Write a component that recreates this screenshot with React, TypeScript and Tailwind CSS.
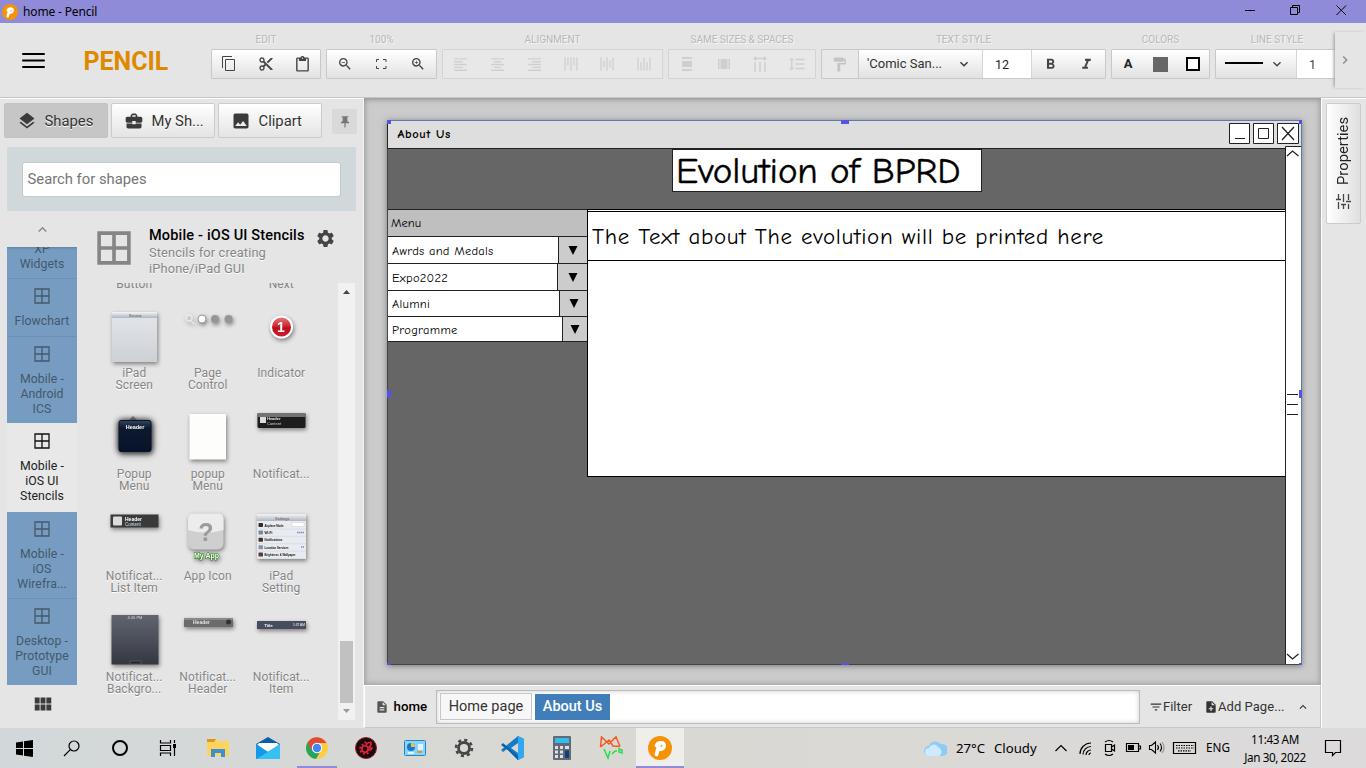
import React from "react";
import {
  MdLayers, MdBusinessCenter, MdImage, MdPushPin, MdSettings, MdZoomIn, MdZoomOut, MdContentCut,
  MdFormatAlignLeft, MdFormatAlignCenter, MdFormatAlignRight, MdFormatPaint, MdFormatBold, MdFormatItalic,
  MdExpandMore, MdExpandLess, MdChevronRight, MdViewModule, MdDescription, MdNoteAdd, MdFilterList,
  MdFormatLineSpacing, MdContentPaste,
} from "react-icons/md";

const ROBOTO = "font-['Roboto',sans-serif]";
const SEGOE = "font-['Noto_Sans',sans-serif]";

function PencilLogo({ size }: { size: number }) {
  return (
    <svg width={size} height={size} viewBox="0 0 24 24" className="shrink-0">
      <circle cx="12" cy="12" r="12" fill="#f49305" />
      <path d="M8.500 18.500l2.500-9.500M8.500 9.500Q9.500 6.800 12.500 6.800q4.200 0 3.500 3.400-.7 3-4.500 3" fill="none" stroke="#fff" strokeWidth="3.800" strokeLinejoin="round" strokeLinecap="round" />
    </svg>
  );
}

function TitleBar() {
  return (
    <header className="flex h-[23px] shrink-0 items-center bg-[#8f8bd9] pl-[2px]">
      <PencilLogo size={16} />
      <span className={`${SEGOE} ml-[5px] text-[12px] tracking-[-0.15px] text-black`}>home - Pencil</span>
      <svg className="ml-auto" width="140" height="23" viewBox="1226 0 140 23" fill="none" stroke="#000">
        <path d="M1245 10.500h10M1290.500 7.500h7v7h-7zM1292.500 7V5.500h7v7h-1.500" />
        <path d="M1336.500 5.500l9.500 9.500M1346 5.500l-9.500 9.500" />
      </svg>
    </header>
  );
}

function Group({ label, width, disabled, children }: { label: string; width: string; disabled?: boolean; children: React.ReactNode }) {
  return (
    <div className={`${width} shrink-0`}>
      <div className="h-[15px] whitespace-nowrap text-center text-[10px] leading-[16px] text-[#b8b8b8] [text-shadow:1px_1px_0_#f6f6f6]">{label}</div>
      <div className={`mt-[2px] flex h-[30px] items-stretch rounded-[1px] border ${disabled ? "border-[#d4d4d4] bg-[#e8e8e8] text-[#cfcfcf]" : "border-[#c8c8c8] bg-linear-to-b from-white to-[#e2e2e2] text-[#444]"}`}>
        {children}
      </div>
    </div>
  );
}

function Slot({ children }: { children: React.ReactNode }) {
  return <div className="flex flex-1 items-center justify-center">{children}</div>;
}

function Glyph({ d, w = 1 }: { d: string; w?: number }) {
  return (
    <svg width="16" height="16" viewBox="0 0 16 16" fill="none" stroke="currentColor" strokeWidth={w}>
      <path d={d} />
    </svg>
  );
}

function Toolbar() {
  return (
    <div className="flex h-[75px] shrink-0 border-b border-[#c6c6c6] bg-[#e5e5e5]">
      <svg className="mt-[29px] ml-[22px]" width="24" height="18" viewBox="0 0 24 18" stroke="#000" strokeWidth="2" strokeLinecap="round">
        <path d="M1 2h21M1 8.500h21M1 15h21" />
      </svg>
      <div className="mt-[22px] ml-[37.500px] w-[127.500px] text-[25px] leading-[34px] font-bold tracking-[-0.050px] text-[#de8a00]">PENCIL</div>
      <div className="flex w-[1124px] gap-[5px] overflow-hidden pt-[9px]">
        <Group label="EDIT" width="w-[110px]">
          <Slot><Glyph d="M3.500 3.500h9v11h-9zM.5 12V.5H10" /></Slot>
          <Slot><MdContentCut size={16} /></Slot>
          <Slot><MdContentPaste size={17} /></Slot>
        </Group>
        <Group label="100%" width="w-[111px]">
          <Slot><MdZoomOut size={16} /></Slot>
          <Slot><Glyph d="M3.500 6V3.500H6M10 3.500h3V6M13 10v2.500h-3M6 12.500H3.500V10" /></Slot>
          <Slot><MdZoomIn size={16} /></Slot>
        </Group>
        <Group label="ALIGNMENT" width="w-[221px]" disabled>
          <Slot><MdFormatAlignLeft size={17} className="-ml-[1px]" /></Slot>
          <Slot><MdFormatAlignCenter size={17} /></Slot>
          <Slot><MdFormatAlignRight size={17} /></Slot>
          <Slot><Glyph w={1.3} d="M2 1.500v13M5 1.500v8M8 1.500v13M11 1.500v8M14 1.500v13" /></Slot>
          <Slot><Glyph w={1.3} d="M2 1.500v13M5 4.500v7M8 1.500v13M11 4.500v7M14 1.500v13" /></Slot>
          <Slot><Glyph w={1.3} d="M2 1.500v13M5 6v8.500M8 1.500v13M11 6v8.500M14 1.500v13" /></Slot>
        </Group>
        <Group label="SAME SIZES & SPACES" width="w-[148px]" disabled>
          <Slot>
            <svg width="12" height="14" viewBox="0 0 12 14" fill="currentColor"><path d="M1 0h10v2H1zM1 4h10v6H1zM1 12h10v2H1z" /></svg>
          </Slot>
          <Slot>
            <svg width="14" height="12" viewBox="0 0 14 12" fill="currentColor"><path d="M1 1h1.500v10H1zM3.500 1h7v10h-7zM11.500 1H13v10h-1.500z" /></svg>
          </Slot>
          <Slot><Glyph w={1.4} d="M3 6v10M8 6v10M13 6v10M2 2.500h12M4 .5l-2 2 2 2M12 .5l2 2-2 2" /></Slot>
          <Slot><MdFormatLineSpacing size={18} /></Slot>
        </Group>
        <Group label="TEXT STYLE" width="w-[285px]">
          <div className="flex w-[37px] items-center justify-center border-r border-[#c8c8c8] bg-[#e8e8e8] pr-[2px] text-[#c4c4c4]"><MdFormatPaint size={17} /></div>
          <div className="flex w-[123px] items-center pl-[8px] text-[#333]">
            <span className="w-[83px] text-[13px] whitespace-nowrap">'Comic San...</span>
            <MdExpandMore size={16} className="ml-[6px]" />
          </div>
          <div className="w-[50px] border-x border-[#d6d6d6] bg-white pl-[12px] text-[12.500px] leading-[29px] text-[#222]">12</div>
          <Slot><MdFormatBold size={17} /></Slot>
          <Slot><MdFormatItalic size={17} /></Slot>
        </Group>
        <Group label="COLORS" width="w-[99px]">
          <Slot><span className="text-[13px] font-bold text-[#222]">A</span></Slot>
          <Slot><span className="size-[15px] bg-[#666]" /></Slot>
          <Slot><span className="size-[14px] border-2 border-black bg-white" /></Slot>
        </Group>
        <Group label="LINE STYLE" width="w-[124px]">
          <div className="flex w-[81px] items-center border-r border-[#d6d6d6] pl-[9px]">
            <span className="-mt-[2px] h-[2px] w-[38px] bg-black" />
            <MdExpandMore size={16} className="ml-[6px]" />
          </div>
          <div className="flex-1 bg-white pl-[12px] text-[12.500px] leading-[29px]">1</div>
        </Group>
      </div>
      <div className="mt-[9px] flex h-[56px] w-[31px] items-center justify-center pr-[11px] text-[#888] shadow-[-2px_0_3px_-1px_#999]">
        <MdChevronRight size={16} />
      </div>
    </div>
  );
}

function TabButton({ icon, label, active }: { icon: React.ReactNode; label: string; active?: boolean }) {
  return (
    <div className={`flex h-[35px] w-[103.500px] items-center gap-[7.500px] rounded-[2px] border pl-[12px] text-[14.800px] text-[#333] [text-shadow:0_1px_0_#fff] ${active ? "border-[#c2c2c2] bg-[#c6c6c6]" : "border-[#cbcbcb] bg-linear-to-b from-white to-[#e4e4e4]"}`}>
      {icon}
      <span className="pt-[1px] whitespace-nowrap">{label}</span>
    </div>
  );
}

function PaneIcon({ size, color, w }: { size: number; color: string; w: number }) {
  return (
    <svg width={size} height={size} viewBox="0 0 16 16" fill="none" stroke={color} strokeWidth={w} className="shrink-0">
      <path d="M1 1h14v14H1zM8 1v14M1 8h14" />
    </svg>
  );
}

function Category({ lines, height, active, last }: { lines: string[]; height: string; active?: boolean; last?: boolean }) {
  return (
    <div className={`${height} flex shrink-0 flex-col items-center ${active ? "bg-[#e8e8e8] pt-[10px] text-[#222]" : "bg-[#769dc1] pt-[9px] text-[#45586b]"} ${!active && !last ? "border-b border-[#6a90b3]" : ""}`}>
      <PaneIcon size={16} color={active ? "#111" : "#45586b"} w={1.3} />
      <div className="mt-[10px] text-center text-[12.300px] leading-[15px] tracking-[0.050px]">
        {lines.map((l) => <div key={l} className="whitespace-nowrap">{l}</div>)}
      </div>
    </div>
  );
}

function Thumb({ kind }: { kind: string }) {
  const f = "Liberation Sans, sans-serif";
  return (
    <svg width="74.500" height="62" viewBox="0 0 74.500 62" className="shrink-0 overflow-visible tracking-normal [filter:drop-shadow(1px_2px_2px_rgba(0,0,0,0.45))]">
      <defs>
        <linearGradient id="silver" x1="0" y1="0" x2="0" y2="1"><stop offset="0" stopColor="#e3e6ea" /><stop offset="1" stopColor="#cdd0d5" /></linearGradient>
        <linearGradient id="bar" x1="0" y1="0" x2="0" y2="1"><stop offset="0" stopColor="#f4f5f7" /><stop offset="1" stopColor="#b0b5c0" /></linearGradient>
        <linearGradient id="slate" x1="0" y1="0" x2="0" y2="1"><stop offset="0" stopColor="#61646e" /><stop offset=".5" stopColor="#4b4f5a" /><stop offset="1" stopColor="#34373e" /></linearGradient>
        <linearGradient id="navy" x1="0" y1="0" x2="0" y2="1"><stop offset="0" stopColor="#34445c" /><stop offset=".25" stopColor="#0c1a30" /><stop offset="1" stopColor="#071329" /></linearGradient>
        <linearGradient id="red" x1="0" y1="0" x2="0" y2="1"><stop offset="0" stopColor="#e58080" /><stop offset=".45" stopColor="#cf2a33" /><stop offset=".55" stopColor="#b80f1c" /><stop offset="1" stopColor="#d02030" /></linearGradient>
      </defs>
      {kind === "ipad" && (<g><path d="M15 7h45v50H15z" fill="url(#silver)" /><path d="M15 7h45v6H15z" fill="url(#bar)" /><text x="32" y="11.500" fontSize="3.500" fill="#555" fontFamily={f}>Receive</text></g>)}
      {kind === "dots" && (<g><g fill="none" stroke="#f3f3f3" strokeWidth="1.500" opacity=".7"><circle cx="18" cy="13" r="3" /><path d="M20 16l3 3" /></g><circle cx="31" cy="14" r="4" fill="#fff" stroke="#999" /><circle cx="44" cy="14" r="4" fill="#969696" /><circle cx="57.500" cy="14" r="4" fill="#969696" /></g>)}
      {kind === "badge" && (<g><circle cx="37.500" cy="22" r="10.500" fill="url(#red)" stroke="#fff" strokeWidth="2" /><text x="37" y="27" textAnchor="middle" fontSize="14" fontWeight="700" fill="#fff" fontFamily={f}>1</text></g>)}
      {kind === "popup" && (<g><path d="M31 15l5-5 5 5z" fill="#77808d" /><rect x="22" y="14.500" width="32" height="31" rx="2" fill="url(#navy)" stroke="#0b1526" className="[filter:drop-shadow(0_0_3px_#222)]" /><text x="38" y="23" textAnchor="middle" fontSize="5.500" fontWeight="700" fill="#fff" fontFamily={f}>Header</text></g>)}
      {kind === "blank" && <path d="M18.500 8h36.500v45.500H18.500z" fill="#fdfdfb" />}
      {kind === "notif" && (<g><rect x="13.500" y="7" width="48" height="15" rx="1.500" fill="#1d1d1d" /><path d="M13.500 7h48v4h-48z" fill="#737373" /><rect x="16" y="11" width="6" height="6" fill="#ddd" /><text x="23" y="14" fontSize="4" fontWeight="700" fill="#e6f0e6" fontFamily={f}>Header</text><text x="23" y="19" fontSize="4" fill="#d0d8d0" fontFamily={f}>Content</text></g>)}
      {kind === "listitem" && (<g><path d="M13.500 6.500h48v13h-48z" fill="#3a3a3a" /><rect x="16" y="8.500" width="9" height="9" rx="1" fill="#ddd" /><text x="28" y="12.500" fontSize="5" fontWeight="700" fill="#fff" fontFamily={f}>Header</text><text x="28" y="18" fontSize="4.500" fill="#c8e0f4" fontFamily={f}>Content</text></g>)}
      {kind === "app" && (<g><rect x="17" y="5.500" width="35.500" height="36" rx="6" fill="#cfcfcf" /><path d="M17 22V11q0-5.500 6-5.500h24q5.500 0 5.500 5.500v11q-18 5-35.500 0z" fill="#ececec" /><text x="35" y="33" textAnchor="middle" fontSize="25" fontWeight="700" fill="#9b9b9b" fontFamily={f}>?</text><text x="35.500" y="50" textAnchor="middle" fontSize="7" fontWeight="700" fill="#f2ffdc" stroke="#2c7a2c" strokeWidth="1.200" paintOrder="stroke" fontFamily={f}>My App</text></g>)}
      {kind === "settings" && (
        <g>
          <path d="M13 6h49v45H13z" fill="#e8ebef" /><path d="M13 6h49v7H13z" fill="url(#bar)" />
          <text x="31" y="11.500" fontSize="4" fill="#555" fontFamily={f}>Settings</text>
          <path d="M48 14.500h12v4H48z" fill="#fff" stroke="#ccc" strokeWidth=".5" />
          {["Airplane Mode", "Wi-Fi", "Notifications", "Location Services", "Brightness & Wallpaper"].map((t, i) => (
            <g key={t}><rect x="14.500" y={15 + i * 7.4} width="4.500" height="4" rx=".7" fill={["#3b2b20", "#7b879c", "#432", "#8b91a8", "#5b3c3c"][i]} /><text x="20.500" y={18.5 + i * 7.4} fontSize="3.600" fontWeight="700" fill="#111" fontFamily={f} textLength={[19, 8, 18, 24, 31][i]} lengthAdjust="spacingAndGlyphs">{t}</text><path d={`M13 ${21 + i * 7.4}h49`} stroke="#ccd" strokeWidth=".4" /></g>
          ))}
          <path d="M53 24.500h7M57 39h3" stroke="#7a8fc0" strokeWidth="1.500" strokeDasharray="1.500 .5" />
        </g>
      )}
      {kind === "background" && (<g><path d="M14.500 6h47v49.500h-47z" fill="url(#slate)" /><text x="38" y="10" textAnchor="middle" fontSize="4" fill="#ddd" fontFamily={f}>4:20 PM</text><path d="M33 55v-3h11v3z" fill="#24272c" stroke="#777" strokeWidth=".5" /></g>)}
      {kind === "header" && (<g><path d="M13 9h49v9H13z" fill="#6b6b6b" /><path d="M13 9h49v2H13z" fill="#8a8a8a" /><text x="22" y="14.500" fontSize="5" fontWeight="700" fill="#dfe6e0" fontFamily={f}>Header</text><circle cx="57.500" cy="13" r="2.500" fill="#333" /></g>)}
      {kind === "item" && (<g><path d="M13 12h49v8H13z" fill="#454d5f" /><text x="20.500" y="17.500" fontSize="4" fontWeight="700" fill="#fff" fontFamily={f}>Title</text><text x="49" y="17" fontSize="3.400" fill="#fff" fontFamily={f} textLength="12" lengthAdjust="spacingAndGlyphs">1:37 AM</text></g>)}
    </svg>
  );
}

const SHAPES: [string, string[]][] = [
  ["ipad", ["iPad", "Screen"]], ["dots", ["Page", "Control"]], ["badge", ["Indicator"]],
  ["popup", ["Popup", "Menu"]], ["blank", ["popup", "Menu"]], ["notif", ["Notificat..."]],
  ["listitem", ["Notificat...", "List Item"]], ["app", ["App Icon"]], ["settings", ["iPad", "Setting"]],
  ["background", ["Notificat...", "Backgro..."]], ["header", ["Notificat...", "Header"]], ["item", ["Notificat...", "Item"]],
];

function Sidebar() {
  return (
    <aside className="flex w-[364px] shrink-0 flex-col border-t border-r border-t-white border-r-[#f4f4f4] bg-[#e5e5e5]">
      <div className="flex h-[40px] shrink-0 items-start gap-[3.500px] pt-[4px] pl-[4px]">
        <TabButton active icon={<MdLayers size={20} className="text-[#3b3b3b]" />} label="Shapes" />
        <TabButton icon={<MdBusinessCenter size={20} className="text-[#3b3b3b]" />} label="My Sh..." />
        <TabButton icon={<MdImage size={20} className="text-[#3b3b3b]" />} label="Clipart" />
        <div className="mt-[6px] ml-[7px] flex size-[25px] items-center justify-center rounded-[2px] bg-[#d9d9d9] text-[#777]"><MdPushPin size={14} /></div>
      </div>
      <div className="mt-[8px] mr-[7px] ml-[7px] h-[64px] shrink-0 bg-[#d1d8dc] p-[15px]">
        <div className="h-[35px] w-[319px] rounded-[3px] border border-[#c5cacd] bg-white pl-[4.500px] text-[14.800px] leading-[32px] text-[#757575]">Search for shapes</div>
      </div>
      <div className="flex min-h-0 flex-1 pl-[7px]">
        <div className="flex w-[70px] shrink-0 flex-col">
          <div className="flex h-[36px] shrink-0 items-center justify-center text-[#888]"><MdExpandLess size={17} /></div>
          <div className="h-[32px] shrink-0 overflow-hidden border-b border-[#6a90b3] bg-[#769dc1] text-center text-[12.300px] leading-[15px] text-[#45586b] shadow-[inset_0_3px_3px_-2px_#5d7f9f]">
            <div className="-mt-[5px]">XP</div>
            <div>Widgets</div>
          </div>
          <Category height="h-[58px]" lines={["Flowchart"]} />
          <Category height="h-[86px]" last lines={["Mobile -", "Android", "ICS"]} />
          <Category height="h-[89px]" active lines={["Mobile -", "iOS UI", "Stencils"]} />
          <Category height="h-[87px]" lines={["Mobile -", "iOS", "Wirefra..."]} />
          <Category height="h-[86px]" last lines={["Desktop -", "Prototype", "GUI"]} />
          <div className="flex justify-center pt-[8px] pl-[1px] text-[#3b3b3b]"><MdViewModule size={22} /></div>
        </div>
        <div className="flex min-w-0 flex-1 flex-col">
          <div className="flex h-[72px] shrink-0 pt-[20px] pl-[20px]">
            <PaneIcon size={34} color="#858585" w={1.7} />
            <div className="ml-[18px] w-[160px]">
              <div className="-mt-[5px] text-[14.500px] leading-[19px] font-medium tracking-[0.170px] whitespace-nowrap text-black">Mobile - iOS UI Stencils</div>
              <div className="text-[12.800px] leading-[16px] tracking-[0.150px] text-[#858585] [text-shadow:0_1px_0_#fff]">Stencils for creating iPhone/iPad GUI</div>
            </div>
            <MdSettings size={21} className="-mt-[3px] ml-[6px] text-[#444]" />
          </div>
          <div className="flex h-[437px]">
            <div className="mr-[20px] ml-[20.500px] w-[220.500px] shrink-0 overflow-hidden text-[12px] leading-[12px] tracking-[0.100px] text-[#858585]">
              <div className="grid h-[22px] grid-cols-3 text-center">
                <div className="-mt-[5px]">Button</div><div /><div className="-mt-[5px]">Next</div>
              </div>
              <div className="grid grid-cols-3">
                {SHAPES.map(([k, lines]) => (
                  <div key={k} className="flex h-[101.300px] flex-col items-center">
                    <Thumb kind={k} />
                    <div className="text-center [text-shadow:0_1px_0_#fff]">{lines.map((l) => <div key={l} className="whitespace-nowrap">{l}</div>)}</div>
                  </div>
                ))}
              </div>
            </div>
            <div className="flex w-[17px] shrink-0 flex-col items-center bg-[#f1f1f1]">
              <svg width="17" height="17" viewBox="0 0 17 17"><path d="M5 11l3.500-4 3.500 4z" fill="#444" /></svg>
              <div className="mt-[341px] h-[62px] w-[13px] bg-[#c1c1c1]" />
              <svg width="17" height="17" viewBox="0 0 17 17"><path d="M5 6l3.500 4L12 6z" fill="#999" /></svg>
            </div>
          </div>
        </div>
      </div>
    </aside>
  );
}

function MenuRow({ text, place, button }: { text: string; place: string; button: string }) {
  return (
    <div className={`absolute left-0 flex w-[201px] border border-[#222] bg-white ${place}`}>
      <span className="flex-1 self-center pt-[2px] pl-[4px] text-[12.500px] tracking-[0.270px]">{text}</span>
      <span className={`flex items-center justify-center border-l border-[#222] bg-[#ccc] ${button}`}>
        <svg width="10" height="9" viewBox="0 0 10 9"><path d="M.5 0h9L5 9z" /></svg>
      </span>
    </div>
  );
}

const HANDLES = [
  "left-0 top-0 w-[4px] h-[4px]", "left-[454px] top-0 w-[8px] h-[4px]", "left-[912px] top-0 w-[3px] h-[4px]",
  "left-0 top-[270px] w-[4px] h-[8px]", "left-[912px] top-[270px] w-[3px] h-[8px]",
  "left-0 top-[543px] w-[4px] h-[2px]", "left-[454px] top-[543px] w-[8px] h-[2px]", "left-[912px] top-[543px] w-[3px] h-[2px]",
];

function Canvas() {
  return (
    <div className="h-[587px] bg-[#cbcbcb] pt-[22px] pl-[23px] shadow-[inset_0_4px_5px_-2px_#999,inset_4px_0_4px_-2px_#aaa,inset_-4px_0_5px_-2px_#aaa,inset_0_-4px_5px_-2px_#aaa]">
      <div className="relative h-[545px] w-[915px] bg-[#666] font-['Comic_Neue','Comic_Sans_MS','Noto_Sans',sans-serif] text-black shadow-[0_1px_6px_#777]">
        <div className="absolute inset-x-0 top-0 h-[29px] border border-[#222] bg-[#dedede] pl-[9.500px] text-[12.500px] leading-[27px] font-bold tracking-[0.600px]">About Us</div>
        <div className="absolute top-[29px] left-[285px] h-[43px] w-[310px] border border-[#222] bg-white pl-[3px] text-[37px] leading-[43px] tracking-[-0.100px] whitespace-nowrap [-webkit-text-stroke:0.4px_#000]">Evolution of BPRD</div>
        <div className="absolute top-[89px] left-0 h-[28px] w-[201px] border border-[#222] bg-[#bfbfbf] pl-[3px] text-[12.500px] leading-[27px]">Menu</div>
        <MenuRow text="Awrds and Medals" place="top-[116px] h-[28px]" button="w-[29px]" />
        <MenuRow text="Expo2022" place="top-[143px] h-[28px]" button="w-[30px]" />
        <MenuRow text="Alumni" place="top-[170px] h-[27px]" button="w-[28px]" />
        <MenuRow text="Programme" place="top-[196px] h-[26px]" button="w-[25px]" />
        <div className="absolute top-[89px] left-[200px] h-[268px] w-[699px] border border-black bg-white" />
        <div className="absolute top-[91px] left-[200px] h-[50px] w-[699px] border border-black bg-white pl-[4px] text-[23px] leading-[49px] tracking-[0.670px] whitespace-nowrap">The Text about The evolution will be printed here</div>
        <svg className="absolute top-0 left-[1px] overflow-visible" width="914" height="545" viewBox="0 0 914 545" fill="none" stroke="#222">
          <path d="M897.500 26.500h16v518h-16z" fill="#fff" />
          <path d="M841.500 3.500h20v20h-20zM865.500 3.500h20v20h-20zM889.500 3.500h21v20h-21z" fill="#fff" />
          <path d="M847 18.500h10M870.500 8.500h10v10h-10z" />
          <path d="M894 7l12 13M906 7l-12 13M899 36l5.500-5 6 5M899 534l5.500 5 6-5" strokeWidth="1.300" />
          <path d="M899 274.500h11M899 284.500h11M899 294.500h11" />
          <path d="M-.5 29v515.500h914" stroke="#444" />
          <path d="M-1 .5h914.500V545" stroke="#527fae" />
        </svg>
        {HANDLES.map((h) => <span key={h} className={`absolute bg-[#5652e8] ${h}`} />)}
      </div>
    </div>
  );
}

function PageBar() {
  return (
    <div className="flex h-[43px] items-center border border-r-[#c8c8c8] border-b-[#c8c8c8] border-t-white border-l-white bg-[#e5e5e5] pl-[10px] text-[13.500px] text-[#333]">
      <MdDescription size={14} className="text-[#555]" />
      <span className="ml-[4.500px] w-[42.500px] text-[13.300px] font-medium text-black">home</span>
      <div className="flex h-[34px] w-[704px] items-center gap-[3px] border border-[#bcbcbc] bg-white pl-[3px] text-[14.500px] shadow-[inset_0_0_5px_#ccc]">
        <div className="h-[27px] w-[92px] border border-[#c8c8c8] bg-[#f7f7f7] text-center leading-[25px]">Home page</div>
        <div className="h-[26px] w-[75px] bg-[#417db8] text-center leading-[25px] font-medium text-white">About Us</div>
      </div>
      <MdFilterList size={14} className="ml-[9px]" />
      <span className="w-[41px] text-[13px]">Filter</span>
      <MdNoteAdd size={14} className="text-[#333]" />
      <span className="text-[13px] tracking-[0.050px] whitespace-nowrap">Add Page...</span>
      <MdExpandLess size={14} className="ml-[11px]" />
    </div>
  );
}

function TaskIcon({ children, width = "w-[48px]", className = "" }: { children: React.ReactNode; width?: string; className?: string }) {
  return <div className={`flex h-[40px] shrink-0 items-center justify-center ${width} ${className}`}>{children}</div>;
}

function Taskbar() {
  return (
    <footer className={`flex h-[40px] shrink-0 bg-linear-to-r from-[#d2d8da] via-[#dad8d2] via-45% to-[#dcdadb] text-black ${SEGOE}`}>
      <TaskIcon><svg width="17" height="17" viewBox="0 0 17 17"><path d="M0 2.500L7 1.500V8H0zM8 1.300L17 0v8H8zM0 9h7v6.500L0 14.500zM8 9h9v8l-9-1.300z" /></svg></TaskIcon>
      <TaskIcon><svg width="18" height="18" viewBox="0 0 18 18" fill="none" stroke="#000" strokeWidth="1.200"><circle cx="11" cy="7" r="5" /><path d="M7.300 10.700L1 17" /></svg></TaskIcon>
      <TaskIcon><svg width="18" height="18" viewBox="0 0 18 18" fill="none" stroke="#000" strokeWidth="2"><circle cx="9" cy="9" r="7" /></svg></TaskIcon>
      <TaskIcon><svg width="18" height="18" viewBox="0 0 18 18" fill="none" stroke="#000" strokeWidth="1.200"><path d="M1.500 1v3h10V1M1.500 17v-3h10v3M1.500 6.500h10v5h-10zM15.500 1v3M15.500 9v8" /><path d="M15.500 5v4" strokeWidth="3" /></svg></TaskIcon>
      <TaskIcon width="w-[52px]"><svg width="22" height="20" viewBox="0 0 22 20"><path d="M0 1h9l2 2h11v15H0z" fill="#ffd45d" /><path d="M0 1h9l-2 3H0z" fill="#d99a19" /><path d="M4 19v-8h14v8h-4v-4H8v4z" fill="#3c8fd3" /></svg></TaskIcon>
      <TaskIcon><svg width="24" height="22" viewBox="0 0 24 22"><path d="M0 7l12-7 12 7v15H0z" fill="#0f5ca8" /><path d="M3 6h18l2 2-11 9L1 8z" fill="#fff" /><path d="M0 7l12 8-3 7H0z" fill="#1698e8" /><path d="M0 22L24 7v15z" fill="#38c0f5" /><path d="M0 7l7 5 5 3L0 22z" fill="#1698e8" /></svg></TaskIcon>
      <TaskIcon width="w-[50px]" className="relative">
        <svg width="22" height="22" viewBox="0 0 22 22"><circle cx="11" cy="11" r="11" fill="#ffcd41" /><path d="M11 11L1.500 5.500A11 11 0 0 0 10 22l5-8.700z" fill="#27a65a" /><path d="M1.500 5.500A11 11 0 0 1 20.500 6H11l-5 7.500z" fill="#dd4b3e" /><circle cx="11" cy="11" r="5.200" fill="#fff" /><circle cx="11" cy="11" r="4.200" fill="#4285f4" /></svg>
        <span className="absolute bottom-0 left-[5px] h-[2px] w-[40px] bg-[#8f8bd9]" />
      </TaskIcon>
      <TaskIcon><svg width="22" height="22" viewBox="0 0 22 22"><circle cx="11" cy="11" r="10.500" fill="#160d10" stroke="#a01824" /><g fill="none" stroke="#ee2233"><circle cx="10" cy="12" r="3.200" strokeWidth="1.600" /><circle cx="10" cy="12" r="5" strokeWidth="1.600" strokeDasharray="2 1.900" /><path d="M12 7q1-2 4-1.500.5 3-1.500 4M14 11l3 0-1 2M9.500 5l2 1" strokeWidth="1.500" /></g></svg></TaskIcon>
      <TaskIcon width="w-[50px]"><svg width="22" height="18" viewBox="0 0 22 18"><rect x=".5" y="1.500" width="21" height="15" rx="1" fill="#86d4ff" stroke="#2784c2" /><circle cx="7" cy="8" r="4" fill="#1679cc" /><path d="M7 8V4a4 4 0 0 1 4 4z" fill="#ffbf35" /><path d="M14 6h5M14 8h5M14 10h5M4 14h6" stroke="#fff" strokeWidth="1.300" /><path d="M13 13h5" stroke="#e49b19" strokeWidth="2" /></svg></TaskIcon>
      <TaskIcon><svg width="20" height="20" viewBox="0 0 20 20" fill="none" stroke="#464646"><circle cx="10" cy="10" r="5.500" strokeWidth="2.800" /><circle cx="10" cy="10" r="8" strokeWidth="2.500" strokeDasharray="3.140 3.140" /></svg></TaskIcon>
      <TaskIcon width="w-[50px]"><svg width="24" height="24" viewBox="0 0 24 24"><path d="M17 0l6 3v18l-6 3L6 13l-4 3-2-2 17-14z" fill="#167ac4" /><path d="M17 7v10l-7-5z" fill="#d6d8d5" /><path d="M0 9l2-2 15 13v4L8 15z" fill="#0a64ac" /><path d="M17 0l6 3v18l-6 3z" fill="#32a8ee" /></svg></TaskIcon>
      <TaskIcon><svg width="18" height="24" viewBox="0 0 18 24"><rect width="18" height="24" rx="1" fill="#626b75" /><path d="M2 2h14v5H2z" fill="#32bdf0" /><path d="M2 10h3v3H2zM7 10h3v3H7zM12 10h4v3h-4zM2 14.500h3v3H2zM7 14.500h3v3H7zM2 19h3v3H2zM7 19h3v3H7z" fill="#dce1e5" /><path d="M12 14.500h4V22h-4z" fill="#10407c" /></svg></TaskIcon>
      <TaskIcon width="w-[50px]"><svg width="24" height="24" viewBox="0 0 24 24" fill="none" strokeWidth="1.500"><path d="M1.500 11L2.500 1 10 8 17 .8 21 10.500M1.500 11L10 4l4 6 7 .5" stroke="#f05a22" /><path d="M5 13l4 9 2-7M13 18l3-3M16 15h2M20 13l3 1v3l-3-1z" stroke="#24df47" /></svg></TaskIcon>
      <TaskIcon className="relative bg-[#efeeeb]">
        <PencilLogo size={24} />
        <span className="absolute inset-x-0 bottom-0 h-[2px] bg-[#8f8bd9]" />
      </TaskIcon>
      <div className="ml-auto flex items-center">
        <svg width="23" height="17" viewBox="0 0 23 17" className="-mr-[1px]"><path d="M5 16a5 5 0 0 1 0-10 7 7 0 0 1 12-2 5 5 0 0 1 2 12z" fill="#8dccf5" /><path d="M5 16a4 4 0 0 1 0-8 5 5 0 0 1 9-1 5 5 0 0 1 1 9z" fill="#cdeaff" /></svg>
        <span className="ml-[10px] w-[96px] pt-[2px] text-[13.200px] whitespace-pre">27°C <span className="ml-[2px]"> Cloudy</span></span>
        <svg width="146" height="24" viewBox="1052 736 146 24" fill="none" stroke="#000" strokeWidth="1.200">
          <path d="M1055.500 751l5.500-5.500 5.500 5.500" />
          <path d="M1080 754a11 11 0 0 1 11-11M1083 754.500a8 8 0 0 1 8-8M1086 755a5 5 0 0 1 5-5M1089 755a2 2 0 0 1 2-2" />
          <path d="M1105.500 744.500h6v7h-6zM1111.500 747l3-2v6l-3-2M1105 742q4-3 8 0M1105 754q4 3 8 0" />
          <path d="M1126.500 743.500h12v8h-12zM1139 746h1.500v3H1139" /><path d="M1128 745h6v5h-6z" fill="#000" stroke="none" />
          <path d="M1149.500 745.500h2l4-3.500v11l-4-3.500h-2zM1157.500 745q2 2.500 0 5M1160 743.500q3 4 0 8" strokeWidth="1.100" /><path d="M1162 742q4 5.500 0 11" stroke="#999" />
          <path d="M1173.500 742.500h22v11h-22z" /><path d="M1176 745.500h18M1176 748h18M1178 750.800h13" strokeDasharray="1.500 1" />
        </svg>
        <span className="ml-[8px] w-[34px] text-[11.700px]">ENG</span>
        <div className="w-[70px] text-center text-[11.700px] leading-[18px] tracking-[-0.400px] whitespace-nowrap"><div>11:43 AM</div><div>Jan 30, 2022</div></div>
        <svg className="mr-[24px] ml-[14px]" width="18" height="18" viewBox="0 0 18 18" fill="none" stroke="#000" strokeWidth="1.200"><path d="M1.500 1.500h15v12h-5l-3 3v-3h-7z" /></svg>
      </div>
    </footer>
  );
}

export default function App() {
  return (
    <div className={`flex h-[768px] w-[1366px] flex-col overflow-hidden ${ROBOTO}`}>
      <TitleBar />
      <Toolbar />
      <div className="flex h-[630px] shrink-0">
        <Sidebar />
        <main className="w-[957px] shrink-0"><Canvas /><PageBar /></main>
        <div className="flex flex-1 items-start border-t border-l border-white bg-[#e5e5e5] pt-[4px] pl-[4px]">
          <div className="flex h-[121px] w-[35px] rotate-180 items-center justify-center gap-[8px] rounded-[2px] border border-[#cbcbcb] bg-linear-to-l from-white to-[#dfdfdf] text-[14.800px] text-[#222] [writing-mode:vertical-rl]">
            <svg width="17" height="17" viewBox="0 0 17 17" fill="none" stroke="#444" strokeWidth="1.300" className="rotate-180"><path d="M3.500 1v5M1 6.500h5M3.500 9v7M8.500 1v8M8.500 12v4M6 11.500h5M13.500 1v6M11 8.500h5M13.500 11v5" /></svg>
            <span>Properties</span>
          </div>
        </div>
      </div>
      <Taskbar />
    </div>
  );
}
